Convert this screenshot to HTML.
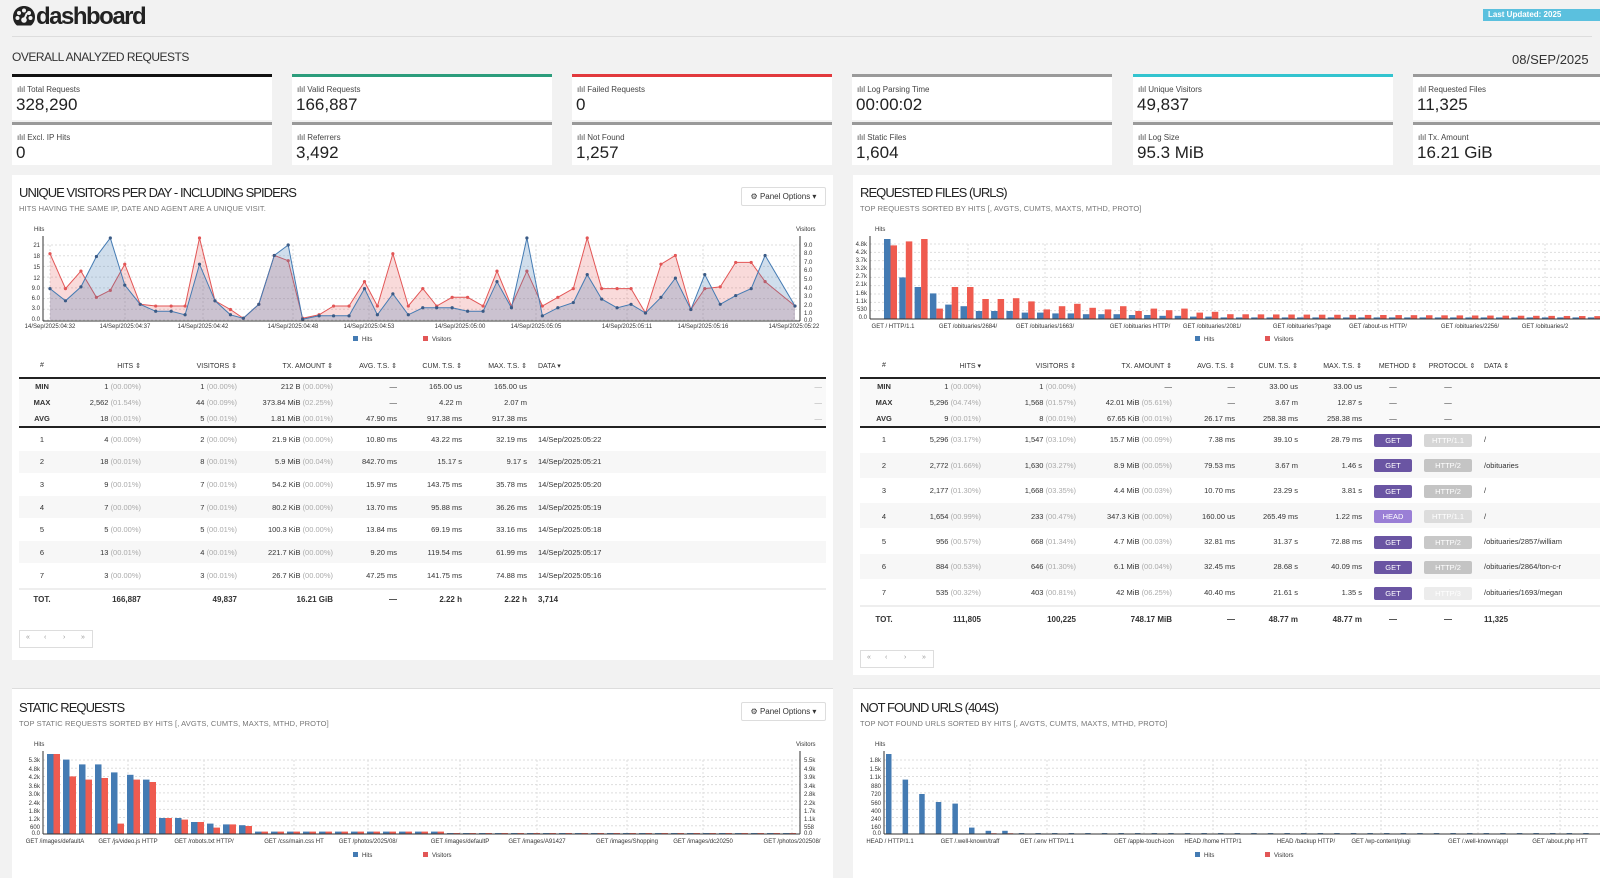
<!DOCTYPE html>
<html><head><meta charset="utf-8">
<style>
*{margin:0;padding:0;box-sizing:border-box}
html,body{width:1600px;height:878px;overflow:hidden;background:#f2f2f2;font-family:"Liberation Sans",Arial,sans-serif;color:#222;position:relative}
.a{position:absolute;white-space:nowrap}
.card{position:absolute;width:260px;background:#fff}
.card .lb{position:absolute;left:5px;top:8px;font-size:8px;color:#444}
.card .v{position:absolute;left:4px;top:18px;font-size:17px;color:#222}
.panel{position:absolute;background:#fff}
.pt{font-size:13px;color:#222;letter-spacing:-0.95px}
.ps{font-size:7.5px;color:#777;letter-spacing:0.1px}
.btn{position:absolute;border:1px solid #ddd;background:#fff;font-size:8px;color:#333;text-align:center;line-height:17px;border-radius:2px}
.row{position:absolute;height:22px;font-size:7.5px;color:#333}
.row span{position:absolute;top:0;white-space:nowrap}
.g{color:#aaa}
.r{text-align:right}
.hd{font-size:7px;color:#333}
.bd{font-weight:bold}
.badge{position:absolute;height:13px;border-radius:2px;font-size:7.5px;color:#fff;text-align:center;line-height:13px}
.pag{position:absolute;height:18px;border:1px solid #ddd;background:#fff;font-size:7px;color:#999}
</style></head><body>

<!-- header -->
<div class="a" style="left:12px;top:3px;font-size:24px;font-weight:bold;letter-spacing:-1.5px;color:#222;line-height:28px">
<svg width="24" height="22" viewBox="0 0 24 22" style="vertical-align:-3px"><path d="M12 1C5.5 1 1 6 1 12c0 3.5 1.5 6.5 4 8.5h14c2.5-2 4-5 4-8.5C23 6 18.5 1 12 1z" fill="#222"/><circle cx="7" cy="8" r="2" fill="#f2f2f2"/><circle cx="12" cy="5.5" r="2" fill="#f2f2f2"/><circle cx="17" cy="8" r="2" fill="#f2f2f2"/><circle cx="5.5" cy="13" r="2" fill="#f2f2f2"/><circle cx="18.5" cy="13" r="2" fill="#f2f2f2"/><circle cx="12" cy="15" r="2.8" fill="#f2f2f2"/><path d="M12 15L15 8" stroke="#f2f2f2" stroke-width="2"/></svg>dashboard</div>
<div class="a" style="left:1483px;top:9px;width:117px;height:12px;background:#5bc0de;color:#fff;font-size:8px;font-weight:bold;line-height:12px;padding-left:5px">Last Updated: 2025</div>
<div class="a" style="left:12px;top:36px;width:1580px;height:1px;background:#ddd"></div>
<div class="a" style="left:12px;top:50px;font-size:12px;color:#333;letter-spacing:-0.5px">OVERALL ANALYZED REQUESTS</div>
<div class="a" style="left:1512px;top:52px;font-size:13px;color:#333">08/SEP/2025</div>

<!-- cards -->
<div class="card" style="left:12px;top:74px;height:46px;border-top:3px solid #111"><div class="lb">ılıl Total Requests</div><div class="v">328,290</div></div>
<div class="card" style="left:292px;top:74px;height:46px;border-top:3px solid #2c9d7c"><div class="lb">ılıl Valid Requests</div><div class="v">166,887</div></div>
<div class="card" style="left:572px;top:74px;height:46px;border-top:3px solid #e2393d"><div class="lb">ılıl Failed Requests</div><div class="v">0</div></div>
<div class="card" style="left:852px;top:74px;height:46px;border-top:3px solid #9a9a9a"><div class="lb">ılıl Log Parsing Time</div><div class="v">00:00:02</div></div>
<div class="card" style="left:1133px;top:74px;height:46px;border-top:3px solid #33c4cf"><div class="lb">ılıl Unique Visitors</div><div class="v">49,837</div></div>
<div class="card" style="left:1413px;top:74px;height:46px;border-top:3px solid #9a9a9a"><div class="lb">ılıl Requested Files</div><div class="v">11,325</div></div>
<div class="card" style="left:12px;top:122px;height:43px;border-top:3px solid #9a9a9a"><div class="lb">ılıl Excl. IP Hits</div><div class="v">0</div></div>
<div class="card" style="left:292px;top:122px;height:43px;border-top:3px solid #9a9a9a"><div class="lb">ılıl Referrers</div><div class="v">3,492</div></div>
<div class="card" style="left:572px;top:122px;height:43px;border-top:3px solid #9a9a9a"><div class="lb">ılıl Not Found</div><div class="v">1,257</div></div>
<div class="card" style="left:852px;top:122px;height:43px;border-top:3px solid #9a9a9a"><div class="lb">ılıl Static Files</div><div class="v">1,604</div></div>
<div class="card" style="left:1133px;top:122px;height:43px;border-top:3px solid #9a9a9a"><div class="lb">ılıl Log Size</div><div class="v">95.3 MiB</div></div>
<div class="card" style="left:1413px;top:122px;height:43px;border-top:3px solid #9a9a9a"><div class="lb">ılıl Tx. Amount</div><div class="v">16.21 GiB</div></div>

<!-- panels -->
<div class="panel" style="left:12px;top:175px;width:821px;height:485px"></div>
<div class="panel" style="left:853px;top:175px;width:747px;height:500px"></div>
<div class="panel" style="left:12px;top:688px;width:821px;height:190px;border-top:1px solid #ddd"></div>
<div class="panel" style="left:853px;top:688px;width:747px;height:190px;border-top:1px solid #ddd"></div>

<div class="a pt" style="left:19px;top:185px">UNIQUE VISITORS PER DAY - INCLUDING SPIDERS</div>
<div class="a ps" style="left:19px;top:204px">HITS HAVING THE SAME IP, DATE AND AGENT ARE A UNIQUE VISIT.</div>
<div class="btn" style="left:741px;top:187px;width:85px;height:19px">⚙ Panel Options ▾</div>
<div class="a pt" style="left:860px;top:185px">REQUESTED FILES (URLS)</div>
<div class="a ps" style="left:860px;top:204px">TOP REQUESTS SORTED BY HITS [, AVGTS, CUMTS, MAXTS, MTHD, PROTO]</div>
<div class="a pt" style="left:19px;top:700px">STATIC REQUESTS</div>
<div class="a ps" style="left:19px;top:719px">TOP STATIC REQUESTS SORTED BY HITS [, AVGTS, CUMTS, MAXTS, MTHD, PROTO]</div>
<div class="btn" style="left:741px;top:702px;width:85px;height:19px">⚙ Panel Options ▾</div>
<div class="a pt" style="left:860px;top:700px">NOT FOUND URLS (404S)</div>
<div class="a ps" style="left:860px;top:719px">TOP NOT FOUND URLS SORTED BY HITS [, AVGTS, CUMTS, MAXTS, MTHD, PROTO]</div>

<svg class="a" style="left:0;top:0" width="1600" height="878" font-family="Liberation Sans, sans-serif" font-size="6" fill="#333">
<g id="grid1" stroke="#ddd" stroke-dasharray="2,2"></g>
<g id="areas"></g>
<line x1="43" y1="236" x2="43" y2="321" stroke="#333"/>
<line x1="800" y1="236" x2="800" y2="321" stroke="#333"/>
<line x1="43" y1="321" x2="800" y2="321" stroke="#333"/>
<text x="34" y="231">Hits</text><text x="796" y="231">Visitors</text>
<g text-anchor="end"><text x="40" y="247">21</text><text x="40" y="258">18</text><text x="40" y="269">15</text><text x="40" y="280">12</text><text x="40" y="290">9.0</text><text x="40" y="300">6.0</text><text x="40" y="310">3.0</text><text x="40" y="321">0.0</text></g>
<g><text x="804" y="247">9.0</text><text x="804" y="255">8.0</text><text x="804" y="264">7.0</text><text x="804" y="272">6.0</text><text x="804" y="281">5.0</text><text x="804" y="290">4.0</text><text x="804" y="298">3.0</text><text x="804" y="307">2.0</text><text x="804" y="315">1.0</text><text x="804" y="322">0.0</text></g>
<g text-anchor="middle"><text x="50" y="328">14/Sep/2025:04:32</text><text x="125" y="328">14/Sep/2025:04:37</text><text x="203" y="328">14/Sep/2025:04:42</text><text x="293" y="328">14/Sep/2025:04:48</text><text x="369" y="328">14/Sep/2025:04:53</text><text x="460" y="328">14/Sep/2025:05:00</text><text x="536" y="328">14/Sep/2025:05:05</text><text x="627" y="328">14/Sep/2025:05:11</text><text x="703" y="328">14/Sep/2025:05:16</text><text x="794" y="328">14/Sep/2025:05:22</text></g>
<rect x="353" y="336" width="5" height="5" fill="#447bb3"/><text x="362" y="341">Hits</text>
<rect x="423" y="336" width="5" height="5" fill="#e25656"/><text x="432" y="341">Visitors</text>

<g id="grid2" stroke="#ddd" stroke-dasharray="2,2"></g>
<g id="bars2"></g>
<line x1="870" y1="236" x2="870" y2="319" stroke="#333"/><line x1="870" y1="319" x2="1600" y2="319" stroke="#333"/>
<text x="875" y="231">Hits</text>
<g text-anchor="end"><text x="867" y="246">4.8k</text><text x="867" y="254">4.2k</text><text x="867" y="262">3.7k</text><text x="867" y="270">3.2k</text><text x="867" y="278">2.7k</text><text x="867" y="286">2.1k</text><text x="867" y="295">1.6k</text><text x="867" y="303">1.1k</text><text x="867" y="311">530</text><text x="867" y="319">0.0</text></g>
<g text-anchor="middle"><text x="893" y="328">GET / HTTP/1.1</text><text x="968" y="328">GET /obituaries/2684/</text><text x="1045" y="328">GET /obituaries/1663/</text><text x="1140" y="328">GET /obituaries HTTP/</text><text x="1212" y="328">GET /obituaries/2081/</text><text x="1302" y="328">GET /obituaries?page</text><text x="1378" y="328">GET /about-us HTTP/</text><text x="1470" y="328">GET /obituaries/2256/</text><text x="1545" y="328">GET /obituaries/2</text></g>
<rect x="1195" y="336" width="5" height="5" fill="#447bb3"/><text x="1204" y="341">Hits</text>
<rect x="1265" y="336" width="5" height="5" fill="#e25656"/><text x="1274" y="341">Visitors</text>

<g id="grid3" stroke="#ddd" stroke-dasharray="2,2"></g>
<g id="bars3"></g>
<line x1="43" y1="751" x2="43" y2="834" stroke="#333"/><line x1="800" y1="751" x2="800" y2="834" stroke="#333"/><line x1="43" y1="834" x2="800" y2="834" stroke="#333"/>
<text x="34" y="746">Hits</text><text x="796" y="746">Visitors</text>
<g text-anchor="end"><text x="40" y="762">5.3k</text><text x="40" y="771">4.8k</text><text x="40" y="779">4.2k</text><text x="40" y="788">3.6k</text><text x="40" y="796">3.0k</text><text x="40" y="805">2.4k</text><text x="40" y="813">1.8k</text><text x="40" y="821">1.2k</text><text x="40" y="829">600</text><text x="40" y="835">0.0</text></g>
<g><text x="804" y="762">5.5k</text><text x="804" y="771">4.9k</text><text x="804" y="779">3.9k</text><text x="804" y="788">3.4k</text><text x="804" y="796">2.8k</text><text x="804" y="805">2.2k</text><text x="804" y="813">1.7k</text><text x="804" y="821">1.1k</text><text x="804" y="829">558</text><text x="804" y="835">0.0</text></g>
<g text-anchor="middle"><text x="55" y="843">GET /images/defaultA</text><text x="128" y="843">GET /js/video.js HTTP</text><text x="204" y="843">GET /robots.txt HTTP/</text><text x="294" y="843">GET /css/main.css HT</text><text x="368" y="843">GET /photos/2025/08/</text><text x="460" y="843">GET /images/defaultP</text><text x="537" y="843">GET /images/A91427</text><text x="627" y="843">GET /images/Shopping</text><text x="703" y="843">GET /images/dc20250</text><text x="792" y="843">GET /photos/202508/</text></g>
<rect x="353" y="852" width="5" height="5" fill="#447bb3"/><text x="362" y="857">Hits</text>
<rect x="423" y="852" width="5" height="5" fill="#e25656"/><text x="432" y="857">Visitors</text>

<g id="grid4" stroke="#ddd" stroke-dasharray="2,2"></g>
<g id="bars4"></g>
<line x1="884" y1="751" x2="884" y2="834" stroke="#333"/><line x1="884" y1="834" x2="1600" y2="834" stroke="#333"/>
<text x="875" y="746">Hits</text>
<g text-anchor="end"><text x="881" y="762">1.8k</text><text x="881" y="771">1.5k</text><text x="881" y="779">1.1k</text><text x="881" y="788">880</text><text x="881" y="796">720</text><text x="881" y="805">560</text><text x="881" y="813">400</text><text x="881" y="821">240</text><text x="881" y="829">160</text><text x="881" y="835">0.0</text></g>
<g text-anchor="middle"><text x="890" y="843">HEAD / HTTP/1.1</text><text x="970" y="843">GET /.well-known/traff</text><text x="1047" y="843">GET /.env HTTP/1.1</text><text x="1144" y="843">GET /apple-touch-icon</text><text x="1213" y="843">HEAD /home HTTP/1</text><text x="1306" y="843">HEAD /backup HTTP/</text><text x="1381" y="843">GET /wp-content/plugi</text><text x="1478" y="843">GET /.well-known/appl</text><text x="1560" y="843">GET /about.php HTT</text></g>
<rect x="1195" y="852" width="5" height="5" fill="#447bb3"/><text x="1204" y="857">Hits</text>
<rect x="1265" y="852" width="5" height="5" fill="#e25656"/><text x="1274" y="857">Visitors</text>

<line x1="19" y1="378" x2="826" y2="378" stroke="#222" stroke-width="2"/>
<line x1="19" y1="427" x2="826" y2="427" stroke="#222" stroke-width="2"/>
<line x1="19" y1="589" x2="826" y2="589" stroke="#ddd"/>
<line x1="860" y1="378" x2="1600" y2="378" stroke="#222" stroke-width="2"/>
<line x1="860" y1="427" x2="1600" y2="427" stroke="#222" stroke-width="2"/>
<line x1="860" y1="606" x2="1600" y2="606" stroke="#ddd"/>
</svg>

<div class="a" style="left:19px;top:451px;width:807px;height:22px;background:#f7f7f7"></div>
<div class="a" style="left:19px;top:496px;width:807px;height:22px;background:#f7f7f7"></div>
<div class="a" style="left:19px;top:541px;width:807px;height:22px;background:#f7f7f7"></div>
<div class="a" style="left:19px;top:379px;width:807px;height:47px;background:#f9f9f9"></div>
<div class="a" style="left:860px;top:453px;width:740px;height:25px;background:#f7f7f7"></div>
<div class="a" style="left:860px;top:503px;width:740px;height:25px;background:#f7f7f7"></div>
<div class="a" style="left:860px;top:554px;width:740px;height:25px;background:#f7f7f7"></div>
<div class="a" style="left:860px;top:379px;width:740px;height:47px;background:#f9f9f9"></div>

<style>
.L0{left:30px;width:24px;text-align:center}.L1{left:60px;width:81px;text-align:right}.L2{left:150px;width:87px;text-align:right}.L3{left:245px;width:88px;text-align:right}.L4{left:340px;width:57px;text-align:right}.L5{left:400px;width:62px;text-align:right}.L6{left:465px;width:62px;text-align:right}.L7{left:538px}.L8{left:800px;width:22px;text-align:right}
.R0{left:872px;width:24px;text-align:center}.R1{left:900px;width:81px;text-align:right}.R2{left:990px;width:86px;text-align:right}.R3{left:1085px;width:87px;text-align:right}.R4{left:1180px;width:55px;text-align:right}.R5{left:1240px;width:58px;text-align:right}.R6{left:1300px;width:62px;text-align:right}.R7{left:1374px;width:38px;text-align:center}.R8{left:1424px;width:48px;text-align:center}.R9{left:1484px}
</style>
<div class="row hd" style="left:0;top:362px;width:840px"><span class="L0">#</span><span class="L1">HITS ⇕</span><span class="L2">VISITORS ⇕</span><span class="L3">TX. AMOUNT ⇕</span><span class="L4">AVG. T.S. ⇕</span><span class="L5">CUM. T.S. ⇕</span><span class="L6">MAX. T.S. ⇕</span><span class="L7">DATA ▾</span></div>
<div class="row" style="left:0;top:382px"><span class="L0 bd">MIN</span><span class="L1">1 <span class="g" style="position:static">(00.00%)</span></span><span class="L2">1 <span class="g" style="position:static">(00.00%)</span></span><span class="L3">212 B <span class="g" style="position:static">(00.00%)</span></span><span class="L4">—</span><span class="L5">165.00 us</span><span class="L6">165.00 us</span><span class="L8 g">—</span></div>
<div class="row" style="left:0;top:398px"><span class="L0 bd">MAX</span><span class="L1">2,562 <span class="g" style="position:static">(01.54%)</span></span><span class="L2">44 <span class="g" style="position:static">(00.09%)</span></span><span class="L3">373.84 MiB <span class="g" style="position:static">(02.25%)</span></span><span class="L4">—</span><span class="L5">4.22 m</span><span class="L6">2.07 m</span><span class="L8 g">—</span></div>
<div class="row" style="left:0;top:414px"><span class="L0 bd">AVG</span><span class="L1">18 <span class="g" style="position:static">(00.01%)</span></span><span class="L2">5 <span class="g" style="position:static">(00.01%)</span></span><span class="L3">1.81 MiB <span class="g" style="position:static">(00.01%)</span></span><span class="L4">47.90 ms</span><span class="L5">917.38 ms</span><span class="L6">917.38 ms</span><span class="L8 g">—</span></div>
<div class="row" style="left:0;top:435px"><span class="L0">1</span><span class="L1">4 <span class="g" style="position:static">(00.00%)</span></span><span class="L2">2 <span class="g" style="position:static">(00.00%)</span></span><span class="L3">21.9 KiB <span class="g" style="position:static">(00.00%)</span></span><span class="L4">10.80 ms</span><span class="L5">43.22 ms</span><span class="L6">32.19 ms</span><span class="L7">14/Sep/2025:05:22</span></div>
<div class="row" style="left:0;top:457px"><span class="L0">2</span><span class="L1">18 <span class="g" style="position:static">(00.01%)</span></span><span class="L2">8 <span class="g" style="position:static">(00.01%)</span></span><span class="L3">5.9 MiB <span class="g" style="position:static">(00.04%)</span></span><span class="L4">842.70 ms</span><span class="L5">15.17 s</span><span class="L6">9.17 s</span><span class="L7">14/Sep/2025:05:21</span></div>
<div class="row" style="left:0;top:480px"><span class="L0">3</span><span class="L1">9 <span class="g" style="position:static">(00.01%)</span></span><span class="L2">7 <span class="g" style="position:static">(00.01%)</span></span><span class="L3">54.2 KiB <span class="g" style="position:static">(00.00%)</span></span><span class="L4">15.97 ms</span><span class="L5">143.75 ms</span><span class="L6">35.78 ms</span><span class="L7">14/Sep/2025:05:20</span></div>
<div class="row" style="left:0;top:503px"><span class="L0">4</span><span class="L1">7 <span class="g" style="position:static">(00.00%)</span></span><span class="L2">7 <span class="g" style="position:static">(00.01%)</span></span><span class="L3">80.2 KiB <span class="g" style="position:static">(00.00%)</span></span><span class="L4">13.70 ms</span><span class="L5">95.88 ms</span><span class="L6">36.26 ms</span><span class="L7">14/Sep/2025:05:19</span></div>
<div class="row" style="left:0;top:525px"><span class="L0">5</span><span class="L1">5 <span class="g" style="position:static">(00.00%)</span></span><span class="L2">5 <span class="g" style="position:static">(00.01%)</span></span><span class="L3">100.3 KiB <span class="g" style="position:static">(00.00%)</span></span><span class="L4">13.84 ms</span><span class="L5">69.19 ms</span><span class="L6">33.16 ms</span><span class="L7">14/Sep/2025:05:18</span></div>
<div class="row" style="left:0;top:548px"><span class="L0">6</span><span class="L1">13 <span class="g" style="position:static">(00.01%)</span></span><span class="L2">4 <span class="g" style="position:static">(00.01%)</span></span><span class="L3">221.7 KiB <span class="g" style="position:static">(00.00%)</span></span><span class="L4">9.20 ms</span><span class="L5">119.54 ms</span><span class="L6">61.99 ms</span><span class="L7">14/Sep/2025:05:17</span></div>
<div class="row" style="left:0;top:571px"><span class="L0">7</span><span class="L1">3 <span class="g" style="position:static">(00.00%)</span></span><span class="L2">3 <span class="g" style="position:static">(00.01%)</span></span><span class="L3">26.7 KiB <span class="g" style="position:static">(00.00%)</span></span><span class="L4">47.25 ms</span><span class="L5">141.75 ms</span><span class="L6">74.88 ms</span><span class="L7">14/Sep/2025:05:16</span></div>
<div class="row bd" style="left:0;top:595px;font-size:8px"><span class="L0">TOT.</span><span class="L1">166,887</span><span class="L2">49,837</span><span class="L3">16.21 GiB</span><span class="L4">—</span><span class="L5">2.22 h</span><span class="L6">2.22 h</span><span class="L7">3,714</span></div>
<div class="pag" style="left:19px;top:630px;width:74px"><span class="a" style="left:6px;top:3px">«</span><span class="a" style="left:24px;top:3px">‹</span><span class="a" style="left:43px;top:3px">›</span><span class="a" style="left:61px;top:3px">»</span></div>

<div class="row hd" style="left:0;top:362px;width:1600px"><span class="R0">#</span><span class="R1">HITS ▾</span><span class="R2">VISITORS ⇕</span><span class="R3">TX. AMOUNT ⇕</span><span class="R4">AVG. T.S. ⇕</span><span class="R5">CUM. T.S. ⇕</span><span class="R6">MAX. T.S. ⇕</span><span class="R7" style="width:48px">METHOD ⇕</span><span class="R8" style="width:56px">PROTOCOL ⇕</span><span class="R9">DATA ⇕</span></div>
<div class="row" style="left:0;top:382px;width:1600px"><span class="R0 bd">MIN</span><span class="R1">1 <span class="g" style="position:static">(00.00%)</span></span><span class="R2">1 <span class="g" style="position:static">(00.00%)</span></span><span class="R3">—</span><span class="R4">—</span><span class="R5">33.00 us</span><span class="R6">33.00 us</span><span class="R7">—</span><span class="R8">—</span></div>
<div class="row" style="left:0;top:398px;width:1600px"><span class="R0 bd">MAX</span><span class="R1">5,296 <span class="g" style="position:static">(04.74%)</span></span><span class="R2">1,568 <span class="g" style="position:static">(01.57%)</span></span><span class="R3">42.01 MiB <span class="g" style="position:static">(05.61%)</span></span><span class="R4">—</span><span class="R5">3.67 m</span><span class="R6">12.87 s</span><span class="R7">—</span><span class="R8">—</span></div>
<div class="row" style="left:0;top:414px;width:1600px"><span class="R0 bd">AVG</span><span class="R1">9 <span class="g" style="position:static">(00.01%)</span></span><span class="R2">8 <span class="g" style="position:static">(00.01%)</span></span><span class="R3">67.65 KiB <span class="g" style="position:static">(00.01%)</span></span><span class="R4">26.17 ms</span><span class="R5">258.38 ms</span><span class="R6">258.38 ms</span><span class="R7">—</span><span class="R8">—</span></div>

<div class="row" style="left:0;top:435px;width:1600px"><span class="R0">1</span><span class="R1">5,296 <span class="g" style="position:static">(03.17%)</span></span><span class="R2">1,547 <span class="g" style="position:static">(03.10%)</span></span><span class="R3">15.7 MiB <span class="g" style="position:static">(00.09%)</span></span><span class="R4">7.38 ms</span><span class="R5">39.10 s</span><span class="R6">28.79 ms</span><span class="R9">/</span></div>
<div class="row" style="left:0;top:461px;width:1600px"><span class="R0">2</span><span class="R1">2,772 <span class="g" style="position:static">(01.66%)</span></span><span class="R2">1,630 <span class="g" style="position:static">(03.27%)</span></span><span class="R3">8.9 MiB <span class="g" style="position:static">(00.05%)</span></span><span class="R4">79.53 ms</span><span class="R5">3.67 m</span><span class="R6">1.46 s</span><span class="R9">/obituaries</span></div>
<div class="row" style="left:0;top:486px;width:1600px"><span class="R0">3</span><span class="R1">2,177 <span class="g" style="position:static">(01.30%)</span></span><span class="R2">1,668 <span class="g" style="position:static">(03.35%)</span></span><span class="R3">4.4 MiB <span class="g" style="position:static">(00.03%)</span></span><span class="R4">10.70 ms</span><span class="R5">23.29 s</span><span class="R6">3.81 s</span><span class="R9">/</span></div>
<div class="row" style="left:0;top:512px;width:1600px"><span class="R0">4</span><span class="R1">1,654 <span class="g" style="position:static">(00.99%)</span></span><span class="R2">233 <span class="g" style="position:static">(00.47%)</span></span><span class="R3">347.3 KiB <span class="g" style="position:static">(00.00%)</span></span><span class="R4">160.00 us</span><span class="R5">265.49 ms</span><span class="R6">1.22 ms</span><span class="R9">/</span></div>
<div class="row" style="left:0;top:537px;width:1600px"><span class="R0">5</span><span class="R1">956 <span class="g" style="position:static">(00.57%)</span></span><span class="R2">668 <span class="g" style="position:static">(01.34%)</span></span><span class="R3">4.7 MiB <span class="g" style="position:static">(00.03%)</span></span><span class="R4">32.81 ms</span><span class="R5">31.37 s</span><span class="R6">72.88 ms</span><span class="R9">/obituaries/2857/william</span></div>
<div class="row" style="left:0;top:562px;width:1600px"><span class="R0">6</span><span class="R1">884 <span class="g" style="position:static">(00.53%)</span></span><span class="R2">646 <span class="g" style="position:static">(01.30%)</span></span><span class="R3">6.1 MiB <span class="g" style="position:static">(00.04%)</span></span><span class="R4">32.45 ms</span><span class="R5">28.68 s</span><span class="R6">40.09 ms</span><span class="R9">/obituaries/2864/ton-c-r</span></div>
<div class="row" style="left:0;top:588px;width:1600px"><span class="R0">7</span><span class="R1">535 <span class="g" style="position:static">(00.32%)</span></span><span class="R2">403 <span class="g" style="position:static">(00.81%)</span></span><span class="R3">42 MiB <span class="g" style="position:static">(06.25%)</span></span><span class="R4">40.40 ms</span><span class="R5">21.61 s</span><span class="R6">1.35 s</span><span class="R9">/obituaries/1693/megan</span></div>
<div class="row bd" style="left:0;top:615px;width:1600px;font-size:8px"><span class="R0">TOT.</span><span class="R1">111,805</span><span class="R2">100,225</span><span class="R3">748.17 MiB</span><span class="R4">—</span><span class="R5">48.77 m</span><span class="R6">48.77 m</span><span class="R7">—</span><span class="R8">—</span><span class="R9">11,325</span></div>

<div class="badge" style="left:1374px;top:434px;width:38px;background:#6a55a3">GET</div>
<div class="badge" style="left:1374px;top:459px;width:38px;background:#6a55a3">GET</div>
<div class="badge" style="left:1374px;top:485px;width:38px;background:#6a55a3">GET</div>
<div class="badge" style="left:1374px;top:510px;width:38px;background:#9a7fd6">HEAD</div>
<div class="badge" style="left:1374px;top:536px;width:38px;background:#6a55a3">GET</div>
<div class="badge" style="left:1374px;top:561px;width:38px;background:#6a55a3">GET</div>
<div class="badge" style="left:1374px;top:587px;width:38px;background:#6a55a3">GET</div>
<div class="badge" style="left:1424px;top:434px;width:48px;background:#d6d6d6">HTTP/1.1</div>
<div class="badge" style="left:1424px;top:459px;width:48px;background:#c4c4c4">HTTP/2</div>
<div class="badge" style="left:1424px;top:485px;width:48px;background:#c4c4c4">HTTP/2</div>
<div class="badge" style="left:1424px;top:510px;width:48px;background:#dcdcdc">HTTP/1.1</div>
<div class="badge" style="left:1424px;top:536px;width:48px;background:#c8c8c8">HTTP/2</div>
<div class="badge" style="left:1424px;top:561px;width:48px;background:#c4c4c4">HTTP/2</div>
<div class="badge" style="left:1424px;top:587px;width:48px;background:#ececec">HTTP/3</div>
<div class="pag" style="left:860px;top:650px;width:74px"><span class="a" style="left:6px;top:3px">«</span><span class="a" style="left:24px;top:3px">‹</span><span class="a" style="left:43px;top:3px">›</span><span class="a" style="left:61px;top:3px">»</span></div>

<script>
var NS="http://www.w3.org/2000/svg";
function el(p,t,a){var e=document.createElementNS(NS,t);for(var k in a)e.setAttribute(k,a[k]);p.appendChild(e);return e;}
function grid(id,x0,x1,y0,y1,nh,vx){var g=document.getElementById(id);for(var i=0;i<nh;i++){var y=y0+(y1-y0)*i/(nh-1);el(g,"line",{x1:x0,x2:x1,y1:y,y2:y});}vx.forEach(function(x){el(g,"line",{x1:x,x2:x,y1:y0,y2:y1});});}
grid("grid1",43,800,245,320,8,[50,125,203,293,369,460,536,627,703,794]);
grid("grid2",870,1600,244,319,10,[893,968,1045,1140,1212,1302,1378,1470,1545]);
grid("grid3",43,800,760,834,10,[55,128,204,294,368,460,537,627,703,792]);
grid("grid4",884,1600,760,834,10,[890,970,1047,1144,1213,1306,1381,1478,1560]);
var d=[[95,250,350],[125,350,385],[155,300,345],[185,375,258],[212,355,205],[240,280,340],[270,395,395],[300,400,415],[330,400,415],[357,400,425],[385,205,280],[415,385,385],[445,410,425],[470,435,435],[500,395,395],[530,255,255],[557,270,225],[585,435,438],[617,425,428],[645,400,428],[675,400,428],[705,330,350],[730,400,425],[760,250,365],[790,400,425],[818,350,405],[845,400,405],[875,375,405],[905,375,415],[935,400,415],[962,300,330],[990,400,405],[1020,300,205],[1050,400,428],[1080,375,405],[1110,350,390],[1137,205,310],[1165,350,380],[1195,350,405],[1222,350,395],[1250,420,420],[1280,280,375],[1308,255,320],[1338,410,410],[1365,350,310],[1395,345,395],[1425,275,370],[1455,275,350],[1482,330,255],[1540,400,400]];
function X(z){return 50+(z-95)*745/1445;}function Y(z){var v=(440-z)/235;return 320-v*82;}
var ga=document.getElementById("areas");
[[1,"rgba(226,86,86,0.22)","#e25656","#e25656"],[2,"rgba(68,123,179,0.25)","#447bb3","#3a5a85"]].forEach(function(s){
 var pts=d.map(function(p){return X(p[0]).toFixed(1)+","+Y(p[s[0]]).toFixed(1);});
 el(ga,"path",{d:"M"+X(95)+",320L"+pts.join("L")+"L"+X(1540)+",320Z",fill:s[1],stroke:"none"});
 el(ga,"polyline",{points:pts.join(" "),fill:"none",stroke:s[2],"stroke-width":1});
 d.forEach(function(p){el(ga,"circle",{cx:X(p[0]),cy:Y(p[s[0]]),r:1.6,fill:s[3]});});
});
function bars(id,x0,step,base,h,vals,w){var g=document.getElementById(id);vals.forEach(function(v,i){var x=x0+i*step;
 if(v[0]>0)el(g,"rect",{x:x,y:base-v[0]*h,width:w,height:v[0]*h,fill:"#447bb3"});
 if(v[1]>0)el(g,"rect",{x:x+w,y:base-v[1]*h,width:w,height:v[1]*h,fill:"#ef5b4f"});});}
var b2=[[1,.92],[.52,.97],[.4,1],[.32,.13],[.18,.4],[.16,.4],[.1,.25],[.1,.25],[.1,.26],[.08,.22],[.08,.12],[.07,.16],[.07,.19],[.06,.14],[.06,.12],[.06,.16],[.05,.1],[.05,.13],[.04,.11],[.04,.13],[.03,.08],[.03,.09]];
for(var i=0;i<26;i++)b2.push([.02,.06-i*.001]);
bars("bars2",884,15.3,319,80,b2,6.5);
var b3=[[1,1],[.93,.72],[.87,.68],[.87,.7],[.77,.13],[.74,.68],[.68,.65],[.2,.2],[.2,.18],[.15,.15],[.13,.08],[.12,.12],[.11,.1]];
for(i=0;i<12;i++)b3.push([.03,.03]);for(i=0;i<22;i++)b3.push([.012,.012]);
bars("bars3",47,16,834,80,b3,6.5);
var b4=[[1,0],[.68,0],[.5,0],[.4,0],[.38,0],[.08,0],[.04,.01],[.04,.01]];for(i=0;i<38;i++)b4.push([.012,.005]);
bars("bars4",886,16.6,834,80,b4,5.5);
</script>
</body></html>
